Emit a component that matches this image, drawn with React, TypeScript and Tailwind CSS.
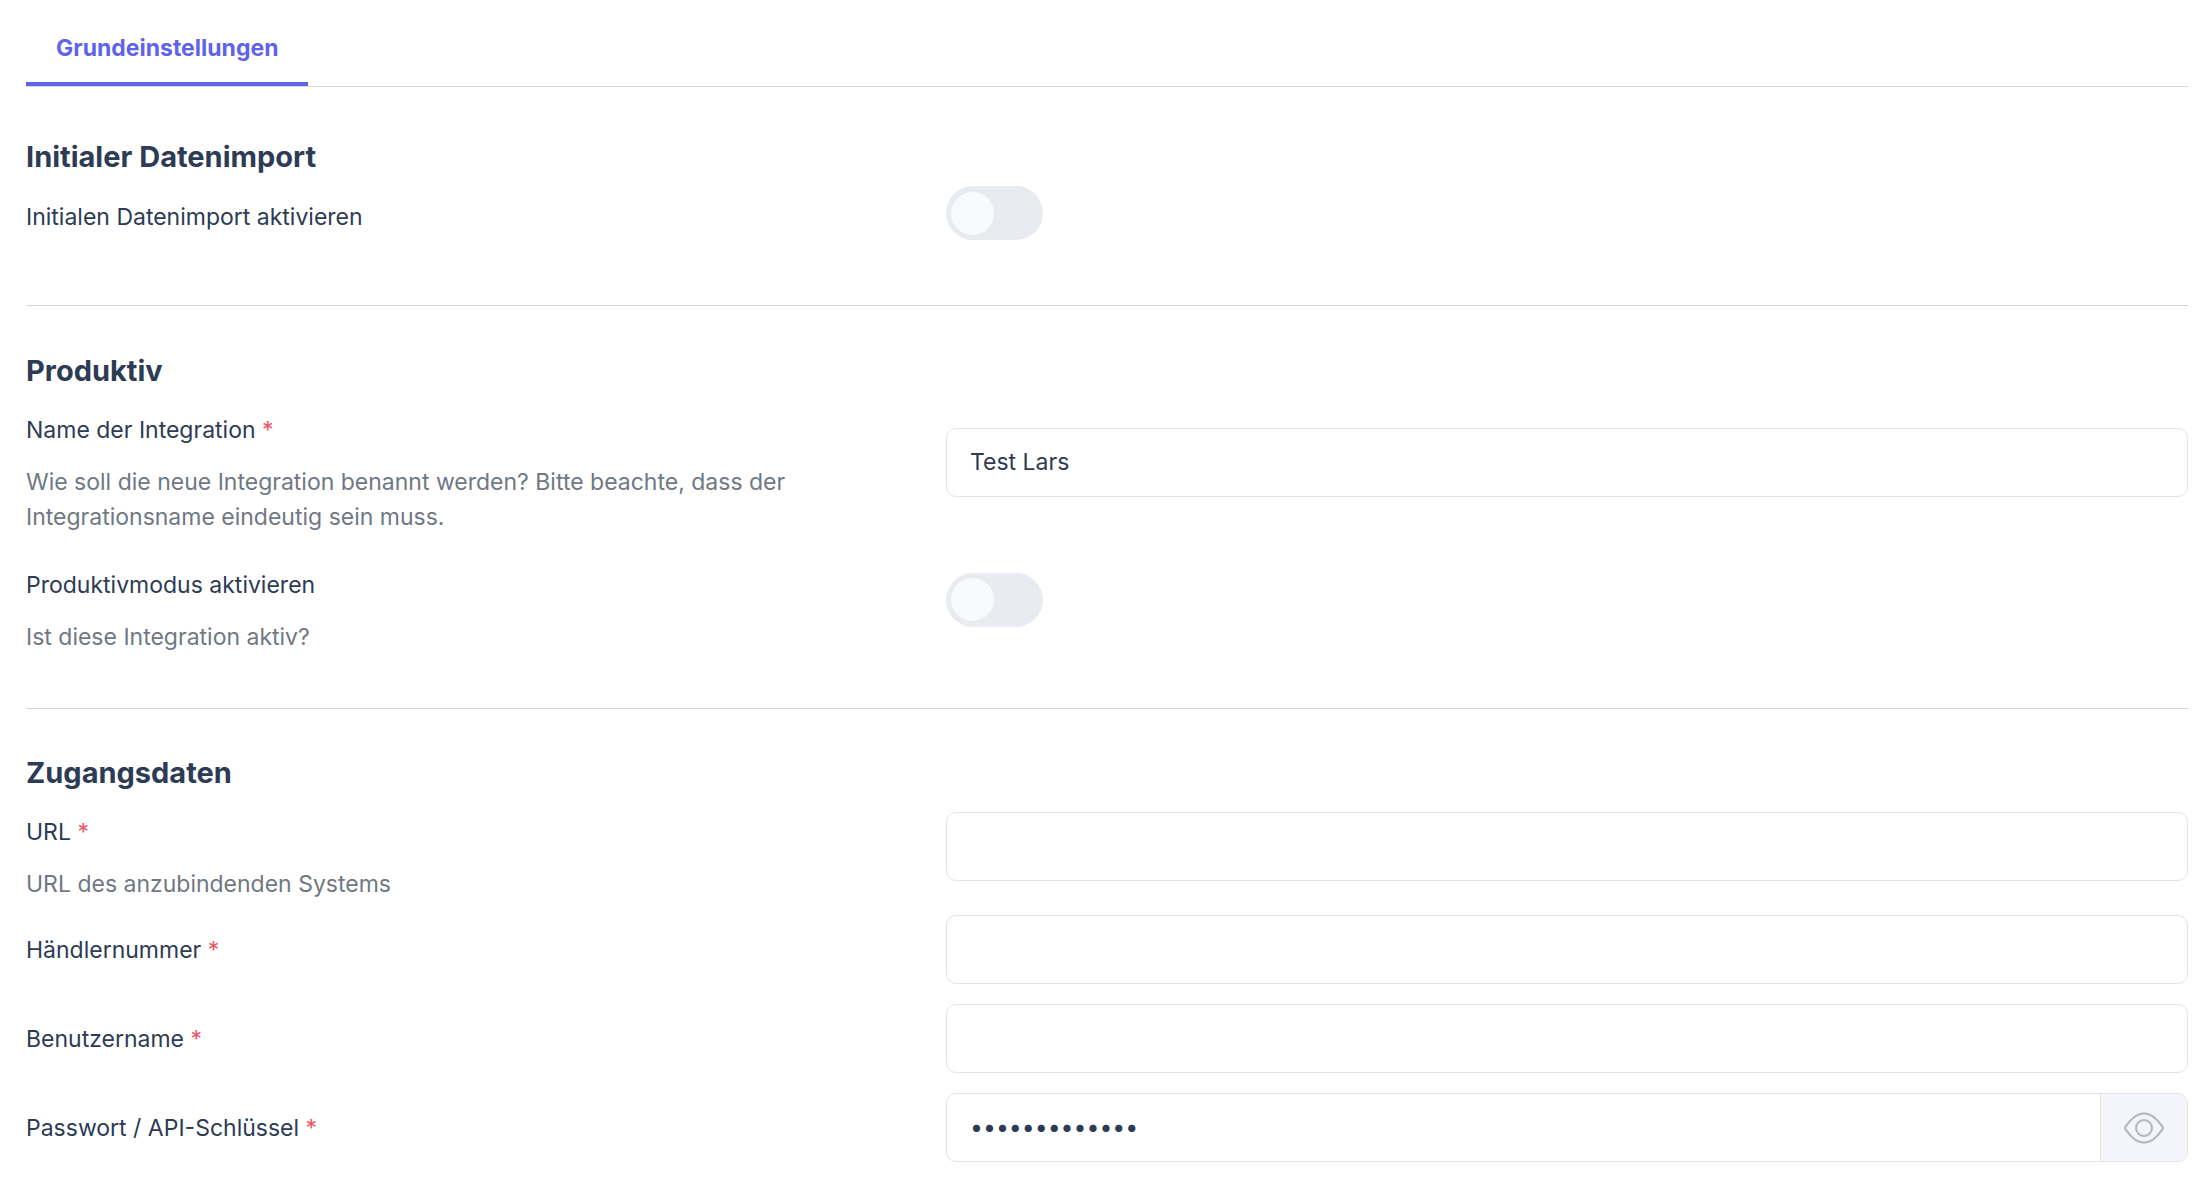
import { useState, type ReactNode } from "react";

const inputClass =
  "h-[69px] w-full rounded-[10px] border border-[#e2e3ed] bg-white px-[23px] text-[23px] text-[#2d3b54] outline-none focus:border-[#5f63ea]";

type RowProps = {
  id: string;
  label: string;
  required?: boolean;
  hint?: string;
  className?: string;
  children: ReactNode;
};

function Row({ id, label, required, hint, className = "", children }: RowProps) {
  return (
    <div className={`grid grid-cols-12 items-center gap-x-[46px] ${className}`}>
      <div className="col-span-5 pt-px leading-[35px]">
        <label htmlFor={id}>
          {label}
          {required && <span className="text-[#ef5565]"> *</span>}
        </label>
        {hint && (
          <p id={`${id}-hint`} className="mt-[17px] text-[#6f7883]">
            {hint}
          </p>
        )}
      </div>
      <div className={hint ? "col-span-7 mb-[23px]" : "col-span-7"}>{children}</div>
    </div>
  );
}

function Toggle({ id }: { id: string }) {
  const [on, setOn] = useState(false);
  return (
    <input
      id={id}
      type="checkbox"
      role="switch"
      checked={on}
      onChange={(e) => setOn(e.target.checked)}
      className="flex h-[54px] w-[97px] cursor-pointer appearance-none items-center rounded-full bg-[#e8ebf0] px-[5px] before:size-[43px] before:rounded-full before:bg-[#f9fafc] before:transition-transform checked:bg-[#5f63ea] checked:before:translate-x-11"
    />
  );
}

function Heading({ children }: { children: ReactNode }) {
  return <h2 className="text-[29px] leading-[35px] font-bold">{children}</h2>;
}

function EyeIcon() {
  return (
    <svg width="40" height="32" viewBox="0 0 40 32" fill="none" stroke="#b3b3c2" strokeWidth="2" strokeLinejoin="round" aria-hidden="true">
      <path d="M1.4 14.8C5 10 11 1.400 20 1.400S35 10 38.600 14.800Q39.200 16 38.600 17.200C35 22 29 30.600 20 30.600S5 22 1.400 17.200Q.8 16 1.400 14.800Z" />
      <circle cx="20" cy="16" r="8" />
    </svg>
  );
}

export default function App() {
  const [name, setName] = useState("Test Lars");
  const [password, setPassword] = useState("geheimwort123");
  const [visible, setVisible] = useState(false);

  return (
    <main className="bg-white pr-[17px] pb-[18px] pl-[26px] font-['Inter',sans-serif] text-[23px] text-[#2d3b54]">
      <div role="tablist" className="flex border-b border-[#d3d9df] pt-[10px]">
        <button
          type="button"
          role="tab"
          aria-selected="true"
          className="h-[76px] border-b-4 border-[#5f63ea] px-[30px] pt-1 font-bold text-[#5f63ea]"
        >
          Grundeinstellungen
        </button>
      </div>

      <section className="border-b border-[#d3d5da] pt-[52px] pb-[65px]">
        <Heading>Initialer Datenimport</Heading>
        <Row id="import" label="Initialen Datenimport aktivieren" className="mt-3 [&_label]:block [&_label]:pt-[7px]">
          <Toggle id="import" />
        </Row>
      </section>

      <section className="border-b border-[#d3d5da] pt-[47px] pb-[53px]">
        <Heading>Produktiv</Heading>
        <Row
          id="name"
          label="Name der Integration"
          required
          hint="Wie soll die neue Integration benannt werden? Bitte beachte, dass der Integrationsname eindeutig sein muss."
          className="mt-6"
        >
          <input id="name" type="text" value={name} onChange={(e) => setName(e.target.value)} className={inputClass} />
        </Row>
        <Row id="active" label="Produktivmodus aktivieren" hint="Ist diese Integration aktiv?" className="mt-8">
          <Toggle id="active" />
        </Row>
      </section>

      <section className="pt-[46px]">
        <Heading>Zugangsdaten</Heading>
        <Row id="url" label="URL" required hint="URL des anzubindenden Systems" className="mt-[22px]">
          <input id="url" type="text" className={inputClass} />
        </Row>
        <Row id="dealer" label="Händlernummer" required className="mt-[11px]">
          <input id="dealer" type="text" className={inputClass} />
        </Row>
        <Row id="user" label="Benutzername" required className="mt-5">
          <input id="user" type="text" className={inputClass} />
        </Row>
        <Row id="password" label="Passwort / API-Schlüssel" required className="mt-5">
          <div className="flex h-[69px] overflow-hidden rounded-[10px] border border-[#e2e3ed] bg-white">
            <input
              id="password"
              type={visible ? "text" : "password"}
              value={password}
              onChange={(e) => setPassword(e.target.value)}
              className="min-w-0 flex-1 px-[23px] outline-none"
            />
            <button
              type="button"
              aria-label="Passwort anzeigen"
              onClick={() => setVisible(!visible)}
              className="flex w-[87px] items-center justify-center border-l border-[#e2e3ed] bg-[#f4f5fa]"
            >
              <EyeIcon />
            </button>
          </div>
        </Row>
      </section>
    </main>
  );
}
